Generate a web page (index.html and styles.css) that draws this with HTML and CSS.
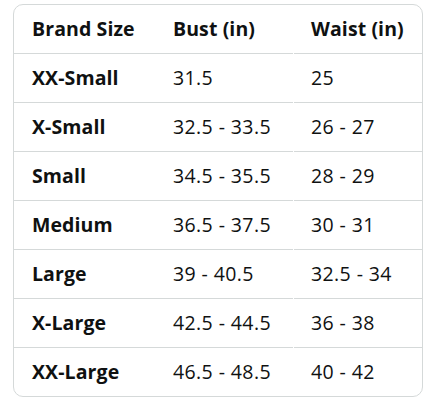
FILE: index.html
```html
<!DOCTYPE html>
<html>
<head>
<meta charset="utf-8">
<link rel="stylesheet" href="styles.css">
</head>
<body>
<div class="wrap">
<table class="chart">
<thead>
<tr><th class="c1">Brand Size</th><th class="c2">Bust (in)</th><th class="c3">Waist (in)</th></tr>
</thead>
<tbody>
<tr><th>XX-Small</th><td>31.5</td><td class="c3">25</td></tr>
<tr><th>X-Small</th><td>32.5 - 33.5</td><td class="c3">26 - 27</td></tr>
<tr><th>Small</th><td>34.5 - 35.5</td><td class="c3">28 - 29</td></tr>
<tr><th>Medium</th><td>36.5 - 37.5</td><td class="c3">30 - 31</td></tr>
<tr><th>Large</th><td>39 - 40.5</td><td class="c3">32.5 - 34</td></tr>
<tr><th>X-Large</th><td>42.5 - 44.5</td><td class="c3">36 - 38</td></tr>
<tr class="last"><th>XX-Large</th><td>46.5 - 48.5</td><td class="c3">40 - 42</td></tr>
</tbody>
</table>
</div>
</body>
</html>
```
FILE: styles.css
```css
html, body {
  margin: 0;
  padding: 0;
  background: #ffffff;
}
body {
  padding: 4px 10px 0 13px;
  font-family: "Open Sans", "Noto Sans", Arial, sans-serif;
  color: #0f1111;
}
.wrap {
  width: 408px;
  border: 1px solid #d5d9d9;
  border-radius: 10px;
  overflow: hidden;
}
.chart {
  width: 100%;
  border-collapse: separate;
  border-spacing: 0;
  font-size: 19.5px;
}
.chart th, .chart td {
  height: 48px;
  padding: 0 0 0 18px;
  text-align: left;
  vertical-align: middle;
  border-bottom: 1px solid #d5d9d9;
  line-height: 22px;
  white-space: nowrap;
}
.chart th { font-weight: 700; letter-spacing: 0.1px; }
.chart td { font-weight: 400; letter-spacing: 0.4px; }
.chart .last th, .chart .last td { border-bottom: none; }
.c1 { width: 123px; }
.c2 { width: 120px; }
.c3 { position: relative; }
.c3::before {
  content: "";
  position: absolute;
  left: 0;
  bottom: -1px;
  width: 1px;
  height: 1px;
  background: #ffffff;
}
```
